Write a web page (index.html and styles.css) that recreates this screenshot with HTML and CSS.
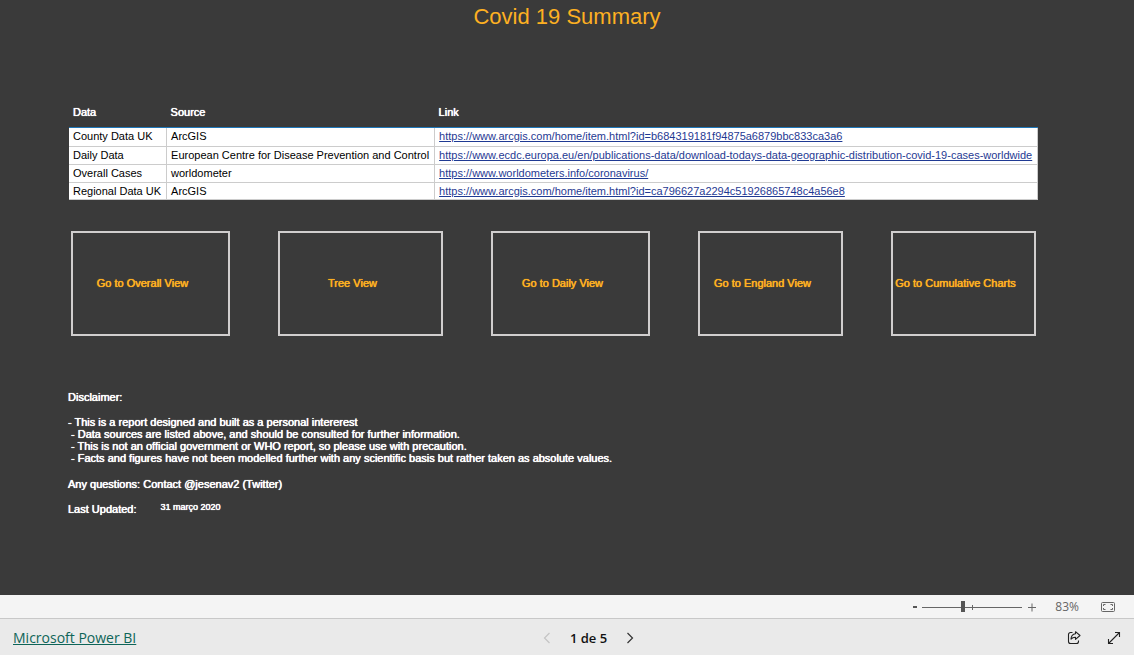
FILE: index.html
```html
<!DOCTYPE html>
<html lang="en">
<head>
<meta charset="utf-8">
<meta name="viewport" content="width=device-width, initial-scale=1">
<title>Covid 19 Summary</title>
<link rel="stylesheet" href="styles.css">
</head>
<body>
<main class="report">
  <h1 class="title">Covid 19 Summary</h1>
  <table class="sources">
    <thead>
      <tr><th scope="col">Data</th><th scope="col">Source</th><th scope="col">Link</th></tr>
    </thead>
    <tbody>
      <tr><td>County Data UK</td><td>ArcGIS</td><td><a href="https://www.arcgis.com/home/item.html?id=b684319181f94875a6879bbc833ca3a6">https://www.arcgis.com/home/item.html?id=b684319181f94875a6879bbc833ca3a6</a></td></tr>
      <tr><td>Daily Data</td><td>European Centre for Disease Prevention and Control</td><td><a href="https://www.ecdc.europa.eu/en/publications-data/download-todays-data-geographic-distribution-covid-19-cases-worldwide">https://www.ecdc.europa.eu/en/publications-data/download-todays-data-geographic-distribution-covid-19-cases-worldwide</a></td></tr>
      <tr><td>Overall Cases</td><td>worldometer</td><td><a href="https://www.worldometers.info/coronavirus/">https://www.worldometers.info/coronavirus/</a></td></tr>
      <tr><td>Regional Data UK</td><td>ArcGIS</td><td><a href="https://www.arcgis.com/home/item.html?id=ca796627a2294c51926865748c4a56e8">https://www.arcgis.com/home/item.html?id=ca796627a2294c51926865748c4a56e8</a></td></tr>
    </tbody>
  </table>
  <nav class="tiles" aria-label="Report views">
    <button class="tile" type="button">Go to Overall View</button>
    <button class="tile" type="button">Tree View</button>
    <button class="tile" type="button">Go to Daily View</button>
    <button class="tile" type="button">Go to England View</button>
    <button class="tile" type="button">Go to Cumulative Charts</button>
  </nav>
  <section class="notes">
    <p>Disclaimer:</p>
    <ul class="notes-list">
      <li>- This is a report designed and built as a personal intererest</li>
      <li class="indented">- Data sources are listed above, and should be consulted for further information.</li>
      <li class="indented">- This is not an official government or WHO report, so please use with precaution.</li>
      <li class="indented">- Facts and figures have not been modelled further with any scientific basis but rather taken as absolute values.</li>
    </ul>
    <p>Any questions: Contact @jesenav2 (Twitter)</p>
    <p class="updated"><span>Last Updated:</span><time class="date" datetime="2020-03-31">31 março 2020</time></p>
  </section>
</main>
<div class="zoombar">
  <button class="icon-button" type="button" aria-label="Zoom out">
    <svg width="12" height="12" viewBox="0 0 12 12"><path d="M4 6h4" stroke="#555" stroke-width="2"/></svg>
  </button>
  <input class="zoom" type="range" min="0" max="100" value="40" aria-label="Zoom">
  <button class="icon-button" type="button" aria-label="Zoom in">
    <svg width="12" height="12" viewBox="0 0 12 12"><path d="M2 6.500h8M6 2.500v8" stroke="#666" fill="none"/></svg>
  </button>
  <span class="percent">83%</span>
  <button class="icon-button" type="button" aria-label="Fit to page">
    <svg width="16" height="12" viewBox="0 0 16 12" fill="none" stroke="#666"><rect x="1.500" y="1.500" width="13" height="9" rx="1"/><path d="M3.500 5V3.500H5.500M10.500 3.500h2V5M12.500 7v1.500H10.500M5.500 8.500h-2V7"/></svg>
  </button>
</div>
<footer class="footer">
  <a class="brand" href="https://powerbi.microsoft.com">Microsoft Power BI</a>
  <div class="pager">
    <button class="icon-button" type="button" aria-label="Previous page" disabled>
      <svg width="16" height="16" viewBox="0 0 16 16"><path d="M10.500 3 5.500 8l5 5" fill="none" stroke="#c4c4c4" stroke-width="1.200"/></svg>
    </button>
    <span class="page-number">1 de 5</span>
    <button class="icon-button" type="button" aria-label="Next page">
      <svg width="16" height="16" viewBox="0 0 16 16"><path d="m5.500 3 5 5-5 5" fill="none" stroke="#333" stroke-width="1.200"/></svg>
    </button>
  </div>
  <div class="actions">
    <button class="icon-button" type="button" aria-label="Share">
      <svg width="16" height="16" viewBox="0 0 16 16" fill="none" stroke="#222" stroke-width="1.100" stroke-linejoin="round"><path d="M6.500 2.500H4.500a2 2 0 0 0-2 2v7a2 2 0 0 0 2 2h6a2 2 0 0 0 2-2V10.500"/><path d="M9.500 1.700 14 5.500 9.500 9.300V7.200C7.500 7.100 6.200 7.700 5 9.100 5.200 6.100 6.800 4.100 9.500 3.800z"/></svg>
    </button>
    <button class="icon-button" type="button" aria-label="Full screen">
      <svg width="16" height="16" viewBox="0 0 16 16" fill="none" stroke="#222" stroke-width="1.100"><path d="M2.500 13.500l11-11M9 2.500h4.500V7M2.500 9v4.500H7"/></svg>
    </button>
  </div>
</footer>
</body>
</html>
```
FILE: styles.css
```css
* {
  box-sizing: border-box;
}

body {
  display: flex;
  flex-direction: column;
  min-height: 100vh;
  margin: 0;
  background: #3a3a3a;
  color: #fff;
  font: 11px/12px "Liberation Sans", Arial, sans-serif;
}

button {
  padding: 0;
  border: 0;
  background: none;
  font: inherit;
  color: inherit;
}

svg {
  display: block;
}

.report {
  flex: 1;
  padding-bottom: 24px;
}

.title {
  margin: 0;
  padding-top: 5px;
  color: #fdb022;
  font-size: 22px;
  font-weight: 400;
  line-height: 24px;
  text-align: center;
}

.sources {
  margin: 69px 0 0 69px;
  border-collapse: collapse;
  white-space: nowrap;
}

.sources th {
  height: 29px;
  padding: 0 5px 0 4px;
  border-bottom: 1px solid #1f77b8;
  text-align: left;
}

/* Semi-bold look at the regular face's width */
.sources th,
.tile,
.notes {
  font-weight: 400;
  text-shadow: 0 0 0 currentColor, 0 0 1px currentColor;
}

.sources td {
  height: 18px;
  padding: 0 5px 0 4px;
  border-bottom: 1px solid #ccc;
  border-right: 1px solid #ccc;
  background: #fff;
  color: #000;
}

.sources tbody tr:first-child td {
  height: 19px;
  padding-bottom: 1px;
}

.sources tbody tr:last-child td {
  height: 17px;
}

.sources a {
  color: #1f3a93;
}

.tiles {
  display: grid;
  grid-template-columns: 159fr 165fr 159fr 145fr 145fr;
  gap: 48px;
  margin: 31px 98px 0 71px;
}

.tile {
  height: 105px;
  padding-right: 16px;
  border: 2px solid #d0cece;
  color: #fdb022;
  white-space: nowrap;
}

.notes {
  margin: 55px 68px 0;
}

.notes p {
  margin: 0;
}

.notes-list {
  margin: 13px 0 14px;
  padding: 0;
  list-style: none;
}

.indented {
  padding-left: 3px;
}

.notes .updated {
  display: flex;
  gap: 24px;
  margin-top: 13px;
}

.date {
  font-size: 9px;
  line-height: 8px;
}

.zoombar {
  display: flex;
  align-items: center;
  justify-content: flex-end;
  height: 23px;
  padding-right: 18px;
  background: #f4f4f4;
  color: #666;
  font: 12px/16px "Open Sans", "Segoe UI", sans-serif;
}

.zoom {
  appearance: none;
  width: 100px;
  height: 12px;
  margin: 0 4px 0 1px;
  background:
    linear-gradient(#666, #666) 50px 4px / 1px 5px no-repeat,
    linear-gradient(#666, #666) 0 6px / 100px 1px no-repeat;
}

.zoom::-webkit-slider-thumb {
  appearance: none;
  width: 4px;
  height: 11px;
  background: #555;
}

.percent {
  margin: 0 21px 0 17px;
}

.footer {
  display: grid;
  grid-template-columns: 1fr auto 1fr;
  align-items: center;
  height: 37px;
  padding: 2px 12px 0 13px;
  border-top: 1px solid #c8c8c8;
  background: #eaeaea;
  color: #111;
  font: 13px/18px "Open Sans", "Segoe UI", sans-serif;
}

.brand {
  justify-self: start;
  color: #0e6558;
  font-size: 14px;
}

.pager {
  display: flex;
  align-items: center;
  gap: 15px;
  margin-right: -42px;
}

.page-number {
  font-weight: 600;
}

.actions {
  display: flex;
  justify-self: end;
  gap: 24px;
}
```
